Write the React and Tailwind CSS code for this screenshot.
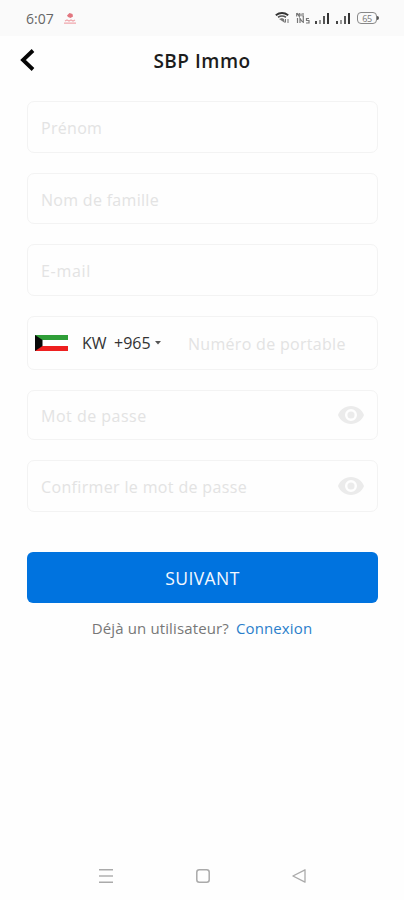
import React from "react";

const EyeIcon = () => (
  <svg viewBox="0 0 26 18" className="w-[26px] h-[18px]" fill="none">
    <path
      d="M13 0C7.1 0 2.1 3.7 0 9c2.1 5.3 7.1 9 13 9s10.9-3.7 13-9C23.9 3.7 18.9 0 13 0Zm0 15a6 6 0 1 1 0-12 6 6 0 0 1 0 12Zm0-2.400a3.6 3.6 0 1 0 0-7.200 3.6 3.6 0 0 0 0 7.200Z"
      fill="#ebebeb"
    />
  </svg>
);

const SignalIcon = () => (
  <svg viewBox="0 0 15 12" className="w-[15px] h-3">
    <rect x="0" y="9" width="2" height="3" fill="#444" />
    <rect x="4" y="8" width="2" height="4" fill="#999" />
    <rect x="8" y="4" width="2" height="8" fill="#555" />
    <rect x="12" y="1" width="2" height="11" fill="#333" />
  </svg>
);

const StatusBar = () => (
  <div className="flex h-9 items-center bg-[#fafafa] pl-[26px] pr-[25px]">
    <span className="w-[28px] whitespace-nowrap pt-px text-[14px] leading-5 text-[#666]">
      6:07
    </span>
    {/* Notification */}
    <svg viewBox="0 0 12 11" className="ml-[10px] h-[11px] w-3">
      <path d="M3 2.500 5.500 0l3 1L9 3.500 6.500 5 4 4Z" fill="#e2767f" />
      <path d="M0 10.200h12M1 8l2-1 2 1 2-1 2 1 2-1" fill="none" stroke="#efa6ac" strokeWidth="1.200" />
    </svg>

    <div className="ml-auto flex items-center">
      {/* Wifi */}
      <svg viewBox="0 0 15 12" className="h-3 w-[15px]" fill="none">
        <path d="M.8 3.300Q7 -1.200 13.200 3.300" stroke="#333" strokeWidth="2" />
        <path d="M3 5.200Q7 2.800 11 5.200" stroke="#555" strokeWidth="1.600" />
        <path d="m4 7 3-1 2 1 1 4Z" fill="#777" />
        <path d="M10.500 10.500V7M13 7v4" stroke="#777" strokeWidth="1" />
      </svg>
      {/* Network speed */}
      <svg viewBox="0 0 14 12" className="ml-[6px] h-3 w-[14px]" fill="none" stroke="#777" strokeWidth="1.200">
        <path d="M.7 1v3.500M1 1l2.300 3.500V1M5 1.500v2.800M7 1v3.500" />
        <path d="M1.500 6v5M4 6v5M4 6.500 6.500 10M7.300 4v7M13 6.500h-2.500v2H13V11h-3" />
      </svg>
      <span className="ml-[5px] flex"><SignalIcon /></span>
      <span className="ml-[6px] flex"><SignalIcon /></span>
      {/* Battery */}
      <span className="ml-[6px] flex items-center">
        <span className="flex h-3 w-[20px] items-center justify-center rounded-[4px] border-[1.5px] border-[#888] text-[9px] leading-none tracking-[-0.3px] text-[#777]">
          65
        </span>
        <span className="h-1 w-[2px] rounded-r bg-[#555]" />
      </span>
    </div>
  </div>
);

const Field = ({ label, className, labelClass, password }) => (
  <div
    className={`flex items-center justify-between rounded-[7px] border-[1.5px] border-[#f3f3f3] px-[13px] ${className}`}
  >
    <span className={`whitespace-nowrap pt-[2px] text-[16px] leading-5 text-[#e3e3e3] ${labelClass}`}>
      {label}
    </span>
    {password && <EyeIcon />}
  </div>
);

const App = () => {
  return (
    <div className="flex h-[900px] w-[404px] flex-col overflow-hidden bg-[#fefefe] font-['Open_Sans','Noto_Sans',sans-serif]">
      <StatusBar />

      {/* Header */}
      <header className="grid h-[48px] grid-cols-[60px_1fr_60px] items-center">
        <svg viewBox="0 0 15 22" className="ml-[20px] h-[22px] w-[15px]" fill="none">
          <path d="M13 1.500 3 11l10 9.500" stroke="#050505" strokeWidth="3.800" />
        </svg>
        <h1 className="whitespace-nowrap pt-px text-center text-[19px] font-semibold leading-6 tracking-[0.5px] text-[#1c1c1c]">
          SBP Immo
        </h1>
      </header>

      {/* Sign up form */}
      <main className="flex flex-col pl-[27px] pr-[26px] pt-[17px]">
        <Field label="Prénom" className="h-[52px]" labelClass="tracking-[0.3px]" />
        <Field label="Nom de famille" className="mt-5 h-[51px]" labelClass="tracking-[0.3px]" />
        <Field label="E-mail" className="mt-5 h-[52px]" labelClass="tracking-[0.7px]" />

        <div className="mt-5 flex h-[54px] items-center rounded-[7px] border-[1.5px] border-[#f3f3f3] pl-[7px] text-[16px] leading-5">
          <svg viewBox="0 0 33 16" className="h-4 w-[33px]">
            <rect width="33" height="16" fill="#fff" />
            <rect width="33" height="5" fill="#2f9e38" />
            <rect y="11" width="33" height="5" fill="#ee2020" />
            <path d="M0 0 7.500 5v6L0 16Z" fill="#080808" />
          </svg>
          <span className="ml-[14px] w-[32px] text-[#333]">KW</span>
          <span className="w-[38px] text-[#333]">+965</span>
          <svg viewBox="0 0 6 4" className="ml-[3px] h-1 w-[6px]">
            <path d="M0 0h6L3 3.500Z" fill="#555" />
          </svg>
          <span className="ml-[27px] whitespace-nowrap pt-px tracking-[0.3px] text-[#e3e3e3]">
            Numéro de portable
          </span>
        </div>

        <Field label="Mot de passe" className="mt-5 h-[50px]" labelClass="tracking-[0.5px]" password />
        <Field label="Confirmer le mot de passe" className="mt-5 h-[52px]" labelClass="tracking-[0.35px]" password />

        <button className="mt-10 h-[51px] rounded-[6px] bg-[#0073df] pt-px text-[17.5px] tracking-[0.4px] text-[#f4f8fe]">
          SUIVANT
        </button>
      </main>

      <p className="mt-[15px] flex justify-center gap-[7px] text-[15px] leading-5 tracking-[0.13px] text-[#777]">
        <span>Déjà un utilisateur?</span>
        <a className="text-[#2b7ecb]">Connexion</a>
      </p>

      {/* Android navigation */}
      <nav className="mb-[17px] mt-auto flex items-center justify-between pl-[99px] pr-[98px]">
        <svg viewBox="0 0 14 14" className="h-[14px] w-[14px]" stroke="#aaa" strokeWidth="1.400">
          <path d="M0 .7h14M0 13.300h14" />
          <path d="M0 7h14" stroke="#c4c4c4" strokeWidth="2" />
        </svg>
        <svg viewBox="0 0 14 14" className="h-[14px] w-[14px]" fill="none">
          <rect x=".8" y=".8" width="12.4" height="12.4" rx="2.500" stroke="#aaa" strokeWidth="1.500" />
        </svg>
        <svg viewBox="0 0 14 14" className="h-[14px] w-[14px]" fill="none">
          <path d="M13 .8v12.400L.9 7Z" stroke="#aaa" strokeWidth="1.300" strokeLinejoin="round" />
        </svg>
      </nav>
    </div>
  );
};

export default App;
